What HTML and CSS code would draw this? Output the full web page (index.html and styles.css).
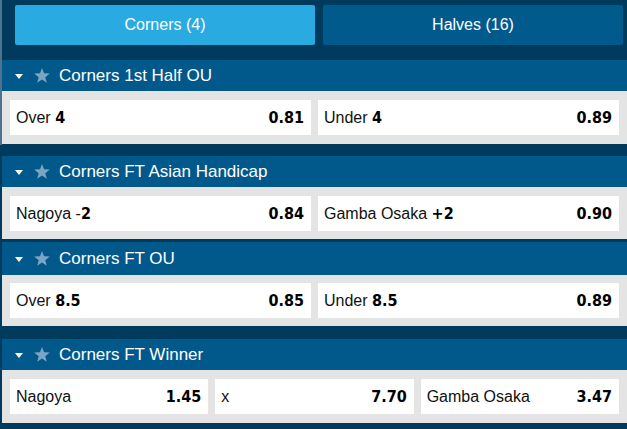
FILE: index.html
```html
<!DOCTYPE html>
<html>
<head>
<meta charset="utf-8">
<link rel="stylesheet" href="styles.css">
</head>
<body>
<div class="page">
  <div class="tabs">
    <div class="tab active">Corners (4)</div>
    <div class="tab">Halves (16)</div>
  </div>

  <section class="market m1">
    <div class="mhead">
      <svg class="caret" width="8" height="5" viewBox="0 0 8 5"><path d="M0 0H8L4 5Z" fill="#fff"/></svg>
      <svg class="star" width="16" height="15" viewBox="0 0 24 23"><path d="M12 0l3.1 8.2 8.9.4-7 5.5 2.4 8.6L12 17.8 4.6 22.7 7 14.1 0 8.6l8.9-.4z" fill="#7da4c3"/></svg>
      <span class="title">Corners 1st Half OU</span>
    </div>
    <div class="mbody cols2">
      <div class="sel"><span class="name">Over <b>4</b></span><span class="odd">0.81</span></div>
      <div class="sel"><span class="name">Under <b>4</b></span><span class="odd">0.89</span></div>
    </div>
  </section>

  <section class="market m2">
    <div class="mhead">
      <svg class="caret" width="8" height="5" viewBox="0 0 8 5"><path d="M0 0H8L4 5Z" fill="#fff"/></svg>
      <svg class="star" width="16" height="15" viewBox="0 0 24 23"><path d="M12 0l3.1 8.2 8.9.4-7 5.5 2.4 8.6L12 17.8 4.6 22.7 7 14.1 0 8.6l8.9-.4z" fill="#7da4c3"/></svg>
      <span class="title">Corners FT Asian Handicap</span>
    </div>
    <div class="mbody cols2">
      <div class="sel"><span class="name">Nagoya -<b>2</b></span><span class="odd">0.84</span></div>
      <div class="sel"><span class="name">Gamba Osaka <b>+2</b></span><span class="odd">0.90</span></div>
    </div>
  </section>

  <section class="market m3">
    <div class="mhead">
      <svg class="caret" width="8" height="5" viewBox="0 0 8 5"><path d="M0 0H8L4 5Z" fill="#fff"/></svg>
      <svg class="star" width="16" height="15" viewBox="0 0 24 23"><path d="M12 0l3.1 8.2 8.9.4-7 5.5 2.4 8.6L12 17.8 4.6 22.7 7 14.1 0 8.6l8.9-.4z" fill="#7da4c3"/></svg>
      <span class="title">Corners FT OU</span>
    </div>
    <div class="mbody cols2">
      <div class="sel"><span class="name">Over <b>8.5</b></span><span class="odd">0.85</span></div>
      <div class="sel"><span class="name">Under <b>8.5</b></span><span class="odd">0.89</span></div>
    </div>
  </section>

  <section class="market m4">
    <div class="mhead">
      <svg class="caret" width="8" height="5" viewBox="0 0 8 5"><path d="M0 0H8L4 5Z" fill="#fff"/></svg>
      <svg class="star" width="16" height="15" viewBox="0 0 24 23"><path d="M12 0l3.1 8.2 8.9.4-7 5.5 2.4 8.6L12 17.8 4.6 22.7 7 14.1 0 8.6l8.9-.4z" fill="#7da4c3"/></svg>
      <span class="title">Corners FT Winner</span>
    </div>
    <div class="mbody cols3">
      <div class="sel"><span class="name">Nagoya</span><span class="odd">1.45</span></div>
      <div class="sel"><span class="name">x</span><span class="odd">7.70</span></div>
      <div class="sel"><span class="name">Gamba Osaka</span><span class="odd">3.47</span></div>
    </div>
  </section>
</div>
</body>
</html>
```

FILE: styles.css
```css
html, body {
  margin: 0;
  padding: 0;
}
body {
  width: 627px;
  height: 429px;
  overflow: hidden;
  background: linear-gradient(#4d7393, #4d7393) no-repeat 0 0 / 2px 145px, #003b5e;
  font-family: "Liberation Sans", Arial, sans-serif;
}
.page {
  padding-left: 2px;
}
.tabs {
  display: flex;
  gap: 8px;
  padding: 5px 4px 15px 13px;
}
.tab {
  flex: 1;
  height: 40px;
  display: flex;
  align-items: center;
  justify-content: center;
  color: #fff;
  font-size: 16px;
  background: #015a8c;
  border-radius: 2px;
}
.tab.active {
  background: #29abe2;
}
.mhead {
  height: 31px;
  background: #01588b;
  display: flex;
  align-items: center;
  padding-left: 13px;
  color: #fff;
}
.caret {
  margin-right: 11px;
  margin-top: 1px;
}
.star {
  margin-right: 9px;
}
.title {
  font-size: 17px;
}
.mbody {
  background: #e4e4e4;
  padding: 9px 8px;
  display: grid;
  gap: 7px;
}
.cols2 {
  grid-template-columns: 1fr 1fr;
}
.cols3 {
  grid-template-columns: 1fr 1fr 1fr;
}
.sel {
  height: 35px;
  background: #fff;
  display: flex;
  align-items: center;
  justify-content: space-between;
  padding: 0 7px 0 6px;
  color: #111;
}
.name {
  font-size: 16px;
}
.name b, .odd {
  font-family: "DejaVu Sans Condensed", "DejaVu Sans", sans-serif;
  font-stretch: condensed;
  font-weight: bold;
  font-size: 16px;
  color: #000;
}
.m1 { margin-bottom: 12px; }
.m2 .mbody { padding-bottom: 8px; }
.m2 { margin-bottom: 3px; }
.m3 .mhead { height: 33px; }
.m3 .mbody { padding-top: 8px; padding-bottom: 8px; }
.m3 { margin-bottom: 13px; }
```
